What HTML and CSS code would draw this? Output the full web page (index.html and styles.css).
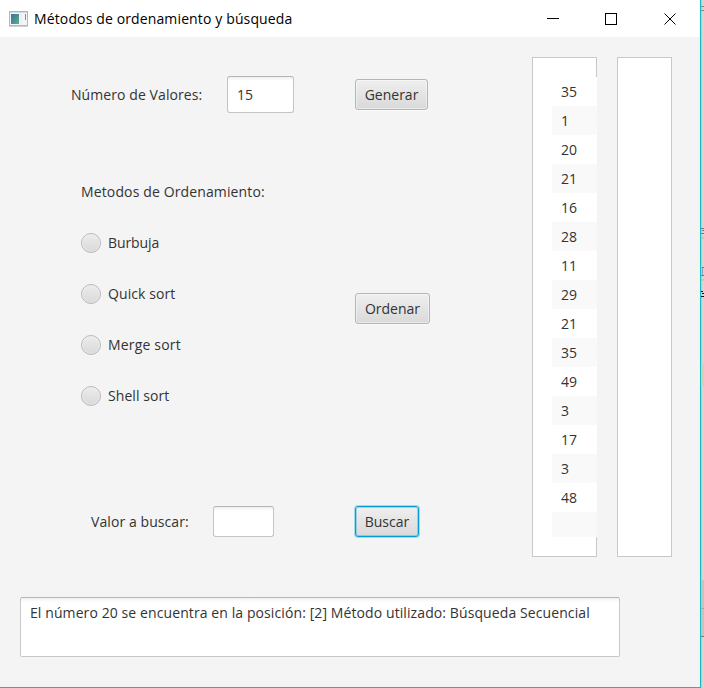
FILE: index.html
```html
<!DOCTYPE html>
<html lang="es">
<head>
<meta charset="utf-8">
<title>Métodos de ordenamiento y búsqueda</title>
<link rel="stylesheet" href="styles.css">
</head>
<body>
<div class="window">
  <header class="titlebar">
    <svg class="app-icon" width="19" height="16" viewBox="0 0 19 16">
      <defs><linearGradient id="pane" x1="0" y1="0" x2="1" y2="1"><stop offset="0" stop-color="#3b6fa0"/><stop offset="1" stop-color="#58b184"/></linearGradient></defs>
      <rect x=".5" y=".5" width="18" height="14" fill="#f4f5f7" stroke="#b4b7bf"/>
      <path d="M1 1.5h17" stroke="#d5d8de"/>
      <rect x="2" y="3" width="8" height="10" fill="url(#pane)"/>
      <path d="M12 3v10" stroke="#e6e8ec"/>
      <path d="M16.5 3v6" stroke="#58a58c"/>
      <path d="M0 15.5h19" stroke="#d0d2d6"/>
    </svg>
    <h1 class="title">Métodos de ordenamiento y búsqueda</h1>
    <svg class="controls" width="130" height="12" viewBox="0 0 130 12" fill="none" stroke="#000" shape-rendering="crispEdges">
      <path d="M0 5.500h12M58.500 .5h11v11h-11z"/>
      <path d="M117.500 .5l11 11M128.500 .5l-11 11" shape-rendering="auto"/>
    </svg>
  </header>
  <main class="content">
    <div class="upper">
      <div class="form">
        <div class="row row-count">
          <label class="label-count">Número de Valores:</label>
          <div class="field field-count">15</div>
          <button class="button generate">Generar</button>
        </div>
        <div class="methods">
          <div class="options">
            <p class="legend">Metodos de Ordenamiento:</p>
            <div class="option"><span class="radio"></span><span class="tight">Burbuja</span></div>
            <div class="option"><span class="radio"></span><span>Quick sort</span></div>
            <div class="option"><span class="radio"></span><span class="loose">Merge sort</span></div>
            <div class="option"><span class="radio"></span><span>Shell sort</span></div>
          </div>
          <button class="button sort">Ordenar</button>
        </div>
        <div class="row row-search">
          <label class="label-search">Valor a buscar:</label>
          <div class="field field-search"></div>
          <button class="button search focused">Buscar</button>
        </div>
      </div>
      <div class="list list-values">
        <ul class="cells">
          <li>35</li><li>1</li><li>20</li><li>21</li><li>16</li><li>28</li><li>11</li><li>29</li><li>21</li><li>35</li><li>49</li><li>3</li><li>17</li><li>3</li><li>48</li><li></li>
        </ul>
      </div>
      <div class="list list-sorted"></div>
    </div>
    <div class="result">El número 20 se encuentra en la posición: [2] Método utilizado: Búsqueda Secuencial</div>
  </main>
</div>
<svg class="backdrop" width="3" height="688" viewBox="0 0 3 688" shape-rendering="crispEdges">
  <rect width="3" height="688" fill="#d6d6d6"/>
  <rect width="1" height="688" fill="#c6c6c6"/>
  <path d="M0 6.500h3M0 10.500h3" stroke="#888"/>
  <path d="M0 228.500h3M1 230.500h2M0 233.500h3M1 267.500h2M0 275.500h3" stroke="#77778a"/>
  <path d="M1.500 268v7" stroke="#8aa0c0"/>
  <path d="M0 237.500h1M2 237.500h1M1 238.500h1M0 279.500h1M2 279.500h1M1 280.500h1" stroke="#a9bf9c"/>
  <path d="M0 291.500h2M1 293.500h2M0 296.500h3" stroke="#101020"/>
  <rect y="365" width="3" height="21" fill="#d3d0b8"/>
  <rect y="580" width="3" height="56" fill="#c4c4c4"/>
  <path d="M0 608.500h3" stroke="#aaa"/>
  <path d="M0 636.500h3" stroke="#777"/>
</svg>
</body>
</html>
```

FILE: styles.css
```css
* { box-sizing: border-box; }
body {
  margin: 0;
  width: 704px;
  height: 688px;
  display: flex;
  overflow: hidden;
  background: #d0d0d0;
  color: #333;
  font: 14px/20px "Open Sans", "Noto Sans", sans-serif;
  white-space: nowrap;
}
.window {
  width: 701px;
  height: 688px;
  border-right: 1px solid #18b9bf;
  border-bottom: 1px solid #18b9bf;
  background: #f4f4f4;
}
.backdrop { flex: none; }
.titlebar {
  display: flex;
  align-items: center;
  height: 37px;
  padding: 0 23px 0 9px;
  background: #fff;
  color: #000;
}
.title {
  margin: 0 0 0 6px;
  font-size: 14px;
  font-weight: 400;
  letter-spacing: .13px;
}
.controls { margin-left: auto; }
.content { padding: 20px 0 0 20px; }
.upper { display: flex; height: 500px; }
.form { width: 512px; padding-top: 19px; }
.row { display: flex; align-items: center; }
.row-count { height: 37px; padding-left: 51px; }
.label-count { width: 156px; letter-spacing: .08px; }
.field {
  border: 1px solid #c4c4c4;
  border-top-color: #b5b5b5;
  border-radius: 3px;
  background: linear-gradient(#f0f0f0, #fff 4px);
}
.field-count { width: 67px; height: 37px; padding: 8px 9px; }
.button {
  height: 31px;
  padding: 0;
  border: 1px solid #b5b5b5;
  border-radius: 3px;
  background: linear-gradient(#efefef, #d9d9d9);
  box-shadow: inset 0 0 0 1px #ffffff70, 0 1px 0 #fafafa;
  color: #333;
  font: inherit;
}
.generate { width: 73px; margin-left: 61px; }
.methods { display: flex; align-items: flex-start; height: 393px; padding: 69px 0 0 61px; }
.options { width: 274px; }
.legend { margin: 0 0 30px; letter-spacing: .13px; }
.option {
  display: flex;
  align-items: center;
  gap: 7px;
  height: 21px;
  margin-bottom: 30px;
  letter-spacing: .08px;
}
.tight { letter-spacing: -.1px; }
.loose { letter-spacing: .18px; }
.radio {
  width: 20px;
  height: 20px;
  border: 1px solid #b9b9b9;
  border-radius: 50%;
  background: linear-gradient(#ececec, #d9d9d9);
  box-shadow: inset 0 0 0 1px #ffffff60;
}
.sort { width: 75px; margin-top: 111px; }
.row-search { height: 31px; padding-left: 71px; }
.label-search { width: 122px; letter-spacing: .08px; }
.field-search { width: 61px; height: 31px; }
.search { width: 64px; margin-left: 81px; }
.focused { border-color: #039ed3; box-shadow: 0 0 0 1px #9adcf0, inset 0 0 0 1px #039ed350; }
.list { height: 500px; border: 1px solid #c8c8c8; background: #fff; }
.list-values { width: 65px; padding: 19px 0 0 19px; }
.list-sorted { width: 55px; margin-left: 20px; }
.cells { width: 45px; height: 460px; margin: 0; padding: 0; overflow: hidden; list-style: none; background: #fff; }
.cells li { height: 29px; padding: 5px 9px; }
.cells li:nth-child(even) { background: #f9f9f9; }
.result {
  width: 600px;
  height: 60px;
  margin-top: 40px;
  padding: 5px 9px;
  border: 1px solid #c8c8c8;
  border-top-color: #b5b5b5;
  border-radius: 2px;
  background: linear-gradient(#f0f0f0, #fff 4px);
  letter-spacing: .095px;
}
```
